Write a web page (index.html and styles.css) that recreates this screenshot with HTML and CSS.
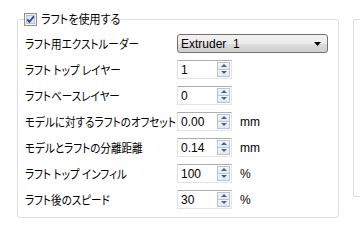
FILE: index.html
```html
<!DOCTYPE html>
<html lang="ja">
<head>
<meta charset="utf-8">
<link rel="stylesheet" href="styles.css">
</head>
<body>
<div class="page">
  <fieldset class="group">
    <legend class="legend">
      <span class="check"><svg width="13" height="13" viewBox="0 0 13 13"><rect x="0.5" y="0.5" width="12" height="12" fill="#f4f4f4" stroke="#8e8f8f"/><rect x="2.5" y="2.5" width="8" height="8" fill="#dfe8f2" stroke="#b6c3d2"/><path d="M3.3 6.4 L5.4 9 L9.8 3.4" fill="none" stroke="#2a3c86" stroke-width="1.7"/></svg></span>
      <span class="title">ラフトを使用する</span>
    </legend>
    <div class="rows">
      <div class="label"><span class="lt">ラフト用エクストルーダー</span></div>
      <div class="combo"><span class="combo-text">Extruder&nbsp; 1</span><svg class="arrow" width="7" height="4" viewBox="0 0 7 4"><path d="M0 0 H7 L3.5 4 Z" fill="#000"/></svg></div>

      <div class="label"><span class="lt">ラフト トップ レイヤー</span></div>
      <div class="spin"><span class="val">1</span><span class="btns"><span class="btn up"></span><span class="btn down"></span></span></div>
      <div class="unit"></div>

      <div class="label"><span class="lt">ラフトベースレイヤー</span></div>
      <div class="spin"><span class="val">0</span><span class="btns"><span class="btn up"></span><span class="btn down"></span></span></div>
      <div class="unit"></div>

      <div class="label"><span class="lt">モデルに対するラフトのオフセット</span></div>
      <div class="spin"><span class="val">0.00</span><span class="btns"><span class="btn up"></span><span class="btn down"></span></span></div>
      <div class="unit">mm</div>

      <div class="label"><span class="lt">モデルとラフトの分離距離</span></div>
      <div class="spin"><span class="val">0.14</span><span class="btns"><span class="btn up"></span><span class="btn down"></span></span></div>
      <div class="unit">mm</div>

      <div class="label"><span class="lt">ラフト トップ インフィル</span></div>
      <div class="spin"><span class="val">100</span><span class="btns"><span class="btn up"></span><span class="btn down"></span></span></div>
      <div class="unit">%</div>

      <div class="label"><span class="lt">ラフト後のスピード</span></div>
      <div class="spin"><span class="val">30</span><span class="btns"><span class="btn up"></span><span class="btn down"></span></span></div>
      <div class="unit">%</div>
    </div>
  </fieldset>
  <div class="side"></div>
</div>
</body>
</html>
```

FILE: styles.css
```css
html, body {
  margin: 0;
  padding: 0;
  background: #fff;
}
body {
  font-family: "Noto Sans CJK JP", "Noto Sans", sans-serif;
  font-size: 12px;
  color: #000;
}
.page {
  display: flex;
  gap: 14px;
  padding: 11px 0 0 17px;
  width: 360px;
  box-sizing: border-box;
  overflow: hidden;
}
.group {
  flex: 0 0 322px;
  box-sizing: border-box;
  margin: 0;
  padding: 0 7px 7px 7px;
  border: 1px solid #d5dfe5;
  border-radius: 3px;
  min-inline-size: 0;
  height: 207px;
}
.legend {
  display: flex;
  align-items: center;
  gap: 4px;
  padding: 0 2px 0 0;
  margin-left: -1px;
  height: 16px;
  line-height: 16px;
  font-feature-settings: "palt";
}
.check {
  display: flex;
  width: 13px;
  height: 13px;
}
.title {
  display: inline-block;
  width: 77px;
  white-space: nowrap;
  transform: scaleX(0.92);
  transform-origin: left center;
}
.rows {
  display: grid;
  grid-template-columns: 152px 55px 1fr;
  grid-auto-rows: 19px;
  row-gap: 7px;
  margin-top: 7px;
  align-items: center;
}
.label {
  font-feature-settings: "palt";
  white-space: nowrap;
  line-height: 19px;
  overflow: visible;
}
.lt {
  display: inline-block;
  transform: scaleX(0.88);
  transform-origin: left center;
}
.combo {
  grid-column: 2 / 4;
  width: 151px;
  height: 19px;
  box-sizing: border-box;
  border: 1px solid #707070;
  border-radius: 3px;
  background: linear-gradient(#f2f2f2 0, #ebebeb 50%, #dddddd 50%, #cfcfcf 100%);
  display: flex;
  align-items: center;
  justify-content: space-between;
  padding: 0 6px 0 3px;
}
.combo-text {
  font-family: "Liberation Sans", Arial, sans-serif;
  font-size: 12px;
}
.spin {
  height: 19px;
  box-sizing: border-box;
  border: 1px solid #e2e3ea;
  border-top-color: #abadb3;
  background: #fff;
  display: flex;
  align-items: center;
  justify-content: space-between;
  padding: 0 1px 0 3px;
}
.val {
  font-family: "Liberation Sans", Arial, sans-serif;
  font-size: 12px;
}
.btns {
  display: flex;
  flex-direction: column;
  width: 13px;
  height: 15px;
}
.btn {
  flex: 1;
  position: relative;
  border: 1px solid #b9c4d2;
  background: linear-gradient(#f3f6fa, #e3e9f1);
}
.btn.down {
  border-top: none;
}
.btn::after {
  content: "";
  position: absolute;
  left: 3px;
  width: 0;
  height: 0;
  border-left: 3px solid transparent;
  border-right: 3px solid transparent;
}
.btn.up::after {
  top: 1px;
  border-bottom: 3px solid #4d6185;
}
.btn.down::after {
  top: 1px;
  border-top: 3px solid #4d6185;
}
.unit {
  padding-left: 8px;
  font-family: "Liberation Sans", Arial, sans-serif;
  font-size: 12px;
}
.side {
  flex: 1 0 40px;
  margin-top: 8px;
  height: 176px;
  border: 1px solid #dcdfe3;
  border-right: none;
  border-radius: 3px 0 0 3px;
}
```
